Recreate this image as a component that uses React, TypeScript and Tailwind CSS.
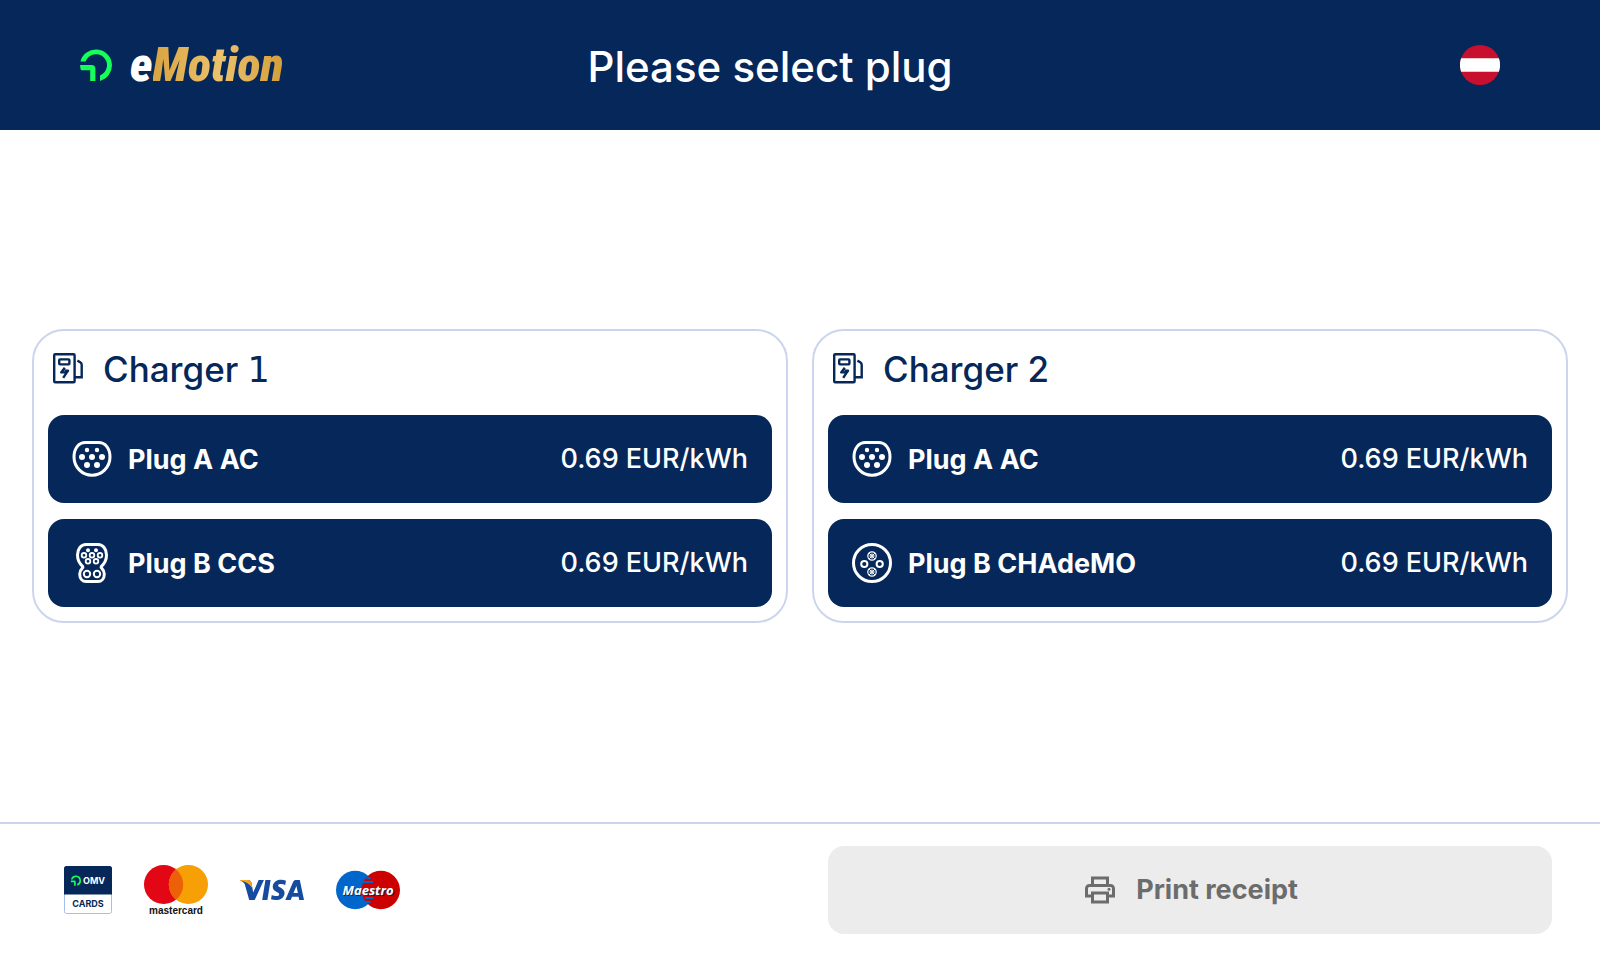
import React from "react";

type PlugKind = "ac" | "ccs" | "chademo";
type Plug = { name: string; kind: PlugKind; price: string };

const chargers: { id: number; plugs: Plug[] }[] = [
  {
    id: 1,
    plugs: [
      { name: "Plug A AC", kind: "ac", price: "0.69 EUR/kWh" },
      { name: "Plug B CCS", kind: "ccs", price: "0.69 EUR/kWh" },
    ],
  },
  {
    id: 2,
    plugs: [
      { name: "Plug A AC", kind: "ac", price: "0.69 EUR/kWh" },
      { name: "Plug B CHAdeMO", kind: "chademo", price: "0.69 EUR/kWh" },
    ],
  },
];

const MARK =
  "M0.4 12.6A16 16 0 1 1 20 31.9V26.4A11 11 0 1 0 5.6 12.6ZM0.1 16H11.6A3.8 3.8 0 0 1 15.4 19.8V32H10.2V21.2H1Q0.1 19 0.1 16Z";

function BrandMark() {
  return (
    <svg className="size-8" viewBox="0 0 32 32" aria-hidden="true">
      <path d={MARK} fill="#14ff5a" />
    </svg>
  );
}

function ChargerIcon() {
  return (
    <svg className="h-[31px] w-[30px]" viewBox="0 0 30 31" fill="none" stroke="#062759" strokeWidth="2.4" aria-hidden="true">
      <rect x="1.2" y="1.2" width="20.4" height="28" rx="1" />
      <rect x="6.2" y="6.4" width="10.2" height="5" rx="0.8" />
      <path d="M24.4 7.6L27.2 9.2Q28.7 10.2 28.7 11.7V24.2H22" />
      <path d="M11.8 14.8L8.2 19.4H13.8L10.2 24.8M11.6 17.8H15L12.6 21" strokeLinejoin="round" />
    </svg>
  );
}

function PlugIcon({ kind }: { kind: PlugKind }) {
  if (kind === "ac") {
    return (
      <svg className="size-10" viewBox="0 0 40 40" fill="#fff" aria-hidden="true">
        <path
          d="M13.5 3.5H26.5C33.5 3.5 38 9.5 38 18C38 28 30 36.2 20 36.2S2 28 2 18C2 9.5 6.5 3.5 13.5 3.5Z"
          fill="none"
          stroke="#fff"
          strokeWidth="3"
        />
        <circle cx="15" cy="11" r="2.2" />
        <circle cx="25" cy="11" r="2.2" />
        <circle cx="10" cy="18" r="3" />
        <circle cx="20" cy="18" r="3" />
        <circle cx="30" cy="18" r="3" />
        <circle cx="15" cy="26" r="3" />
        <circle cx="25" cy="26" r="3" />
      </svg>
    );
  }
  if (kind === "ccs") {
    return (
      <svg className="size-10" viewBox="0 0 40 40" fill="none" stroke="#fff" aria-hidden="true">
        <path
          d="M14 1.5H26C31 1.5 34.5 6 34.5 12C34.5 18 31.5 21.5 29.2 23.6Q28.8 24.6 29.8 25.4C31.4 27 32.3 28.6 32.3 31C32.3 35.5 29.5 38.5 26 38.5H14C10.5 38.5 7.7 35.5 7.7 31C7.7 28.6 8.6 27 10.2 25.4Q11.2 24.6 10.8 23.6C8.5 21.5 5.5 18 5.5 12C5.5 6 9 1.5 14 1.5Z"
          strokeWidth="3"
        />
        <g fill="#fff" stroke="none">
          <circle cx="16" cy="7.2" r="2" />
          <circle cx="24" cy="7.2" r="2" />
        </g>
        <g strokeWidth="1.8">
          <circle cx="12" cy="12.3" r="2.3" />
          <circle cx="20" cy="12.3" r="2.3" />
          <circle cx="28" cy="12.3" r="2.3" />
          <circle cx="16" cy="18.3" r="2.3" />
          <circle cx="24" cy="18.3" r="2.3" />
        </g>
        <g strokeWidth="2">
          <circle cx="15" cy="31" r="3.2" />
          <circle cx="25" cy="31" r="3.2" />
        </g>
      </svg>
    );
  }
  return (
    <svg className="size-10" viewBox="0 0 40 40" fill="none" stroke="#fff" aria-hidden="true">
      <circle cx="20" cy="20" r="18.5" strokeWidth="3" />
      <g strokeWidth="2">
        <circle cx="12.3" cy="21" r="3.1" />
        <circle cx="27.7" cy="21" r="3.1" />
      </g>
      {[13, 29].map((y) => (
        <g key={y}>
          <circle cx="20" cy={y} r="4.2" strokeWidth="1.2" />
          <circle cx="20" cy={y} r="2" strokeWidth="1" />
          <path d={`M17 ${y - 3}l6 6M23 ${y - 3}l-6 6`} strokeWidth="0.9" />
        </g>
      ))}
    </svg>
  );
}

function OmvCards() {
  return (
    <svg className="size-12" viewBox="0 0 48 48" role="img" aria-label="OMV Cards">
      <rect x="0.5" y="0.5" width="47" height="47" rx="2" fill="#fff" stroke="#a9bdea" />
      <path d="M0 28.5V2.5Q0 0 2.5 0H45.5Q48 0 48 2.5V28.5Z" fill="#062759" />
      <path d={MARK} transform="translate(6.8 9.4) scale(0.32)" fill="#14ff5a" />
      <text x="19" y="18" fontFamily="Inter, sans-serif" fontSize="9" fontWeight="700" fill="#fff">OMV</text>
      <text x="24" y="41.4" textAnchor="middle" fontFamily="Inter, sans-serif" fontSize="9" fontWeight="700" fill="#062759">CARDS</text>
    </svg>
  );
}

function Mastercard() {
  return (
    <svg className="h-[52px] w-16" viewBox="0 0 64 52" role="img" aria-label="Mastercard">
      <circle cx="19.6" cy="20.5" r="19.6" fill="#e30615" />
      <circle cx="44.4" cy="20.5" r="19.6" fill="#f7a006" />
      <path d="M32 5.3A19.6 19.6 0 0 1 32 35.7A19.6 19.6 0 0 1 32 5.3Z" fill="#ec6008" />
      <text x="32" y="50" textAnchor="middle" fontFamily="Liberation Sans, sans-serif" fontSize="10" fontWeight="700" fill="#111">mastercard</text>
    </svg>
  );
}

function Visa() {
  return (
    <svg className="h-[22px] w-16" viewBox="0 0 64 22" role="img" aria-label="Visa" fill="#164c9f">
      <path d="M0.5 1H8.2Q10.8 1 11.4 3.6L13.2 13.6L18.6 1H23.9L14.7 21H9.2L4.7 5.1Q3.3 2.8 0.5 1.5Z" />
      <path d="M25.4 1H30.6L27.4 21H22.2Z" />
      <path d="M46 1.7L45.2 5.9C42.6 4.8 38.4 4.4 38.1 6.5C37.9 8.7 45.3 9 44.5 14.7C43.6 20.6 37.2 22.3 31 20.3L31.8 15.9C34.5 17.2 38.8 17.8 39.2 15.5C39.6 13.1 32 12.8 32.8 7C33.7 0.9 41 -0.5 46 1.7Z" />
      <path fillRule="evenodd" d="M55.4 1H59.8L64 21H59.2L58.6 17.7H52L50.7 21H45.3L53.2 2.8Q54 1 55.4 1ZM56.4 6.9L53.5 14H57.9Z" />
      <path d="M0 1H8.2Q10.8 1 11.4 3.6L12.3 9Q8.2 2.8 0 1.5Z" fill="#faa61a" />
    </svg>
  );
}

function Maestro() {
  return (
    <svg className="h-10 w-16" viewBox="0 0 64 40" role="img" aria-label="Maestro">
      <circle cx="44.8" cy="20" r="19.2" fill="#cc0000" />
      <circle cx="19.2" cy="20" r="19.2" fill="#0066cb" />
      <path d="M32 5.7A19.2 19.2 0 0 1 32 34.3A19.2 19.2 0 0 1 32 5.7Z" fill="#cc0000" />
      <path d="M30.5 8.2H34.5M27 12H37M29 28H37.5M27.5 32H34.5" stroke="#0066cb" strokeWidth="1.8" />
      <g fontFamily="Open Sans, sans-serif" fontSize="13" fontWeight="700" fontStyle="italic" textAnchor="middle">
        <text x="33" y="25.6" fill="#102a55">Maestro</text>
        <text x="32" y="24.8" fill="#fff">Maestro</text>
      </g>
    </svg>
  );
}

function PrinterIcon() {
  return (
    <svg className="size-9" viewBox="0 0 24 24" fill="#6c6c6c" aria-hidden="true">
      <path d="M19 8h-1V3H6v5H5c-1.66 0-3 1.34-3 3v6h4v4h12v-4h4v-6c0-1.66-1.34-3-3-3zM8 5h8v3H8V5zm8 14H8v-4h8v4zm2-4v-2H6v2H4v-4c0-.55.45-1 1-1h14c.55 0 1 .45 1 1v4h-2z" />
      <circle cx="18" cy="11.5" r="1" />
    </svg>
  );
}

export default function App() {
  return (
    <div className="flex min-h-screen flex-col bg-white font-[Inter,sans-serif] text-[#062759]">
      <header className="flex h-[130px] items-center bg-[#062759] pl-20 pr-[100px] text-white">
        <div className="grid flex-1 grid-cols-[1fr_auto_1fr] items-center">
          <div className="flex items-center gap-[18px]">
            <BrandMark />
            <span className="font-['Roboto_Condensed','Roboto',sans-serif] text-[48px] leading-none font-black italic">
              e
              <span className="bg-linear-to-r from-[#d9a441] via-[#ecc26c] to-[#d29c35] bg-clip-text pr-1 text-transparent">Motion</span>
            </span>
          </div>
          <h1 className="pt-1 text-[42px] leading-none font-[450]">Please select plug</h1>
        </div>
        <button type="button" aria-label="Deutsch (Österreich)" className="size-10 rounded-full">
          <svg className="size-10" viewBox="0 0 40 40" aria-hidden="true">
            <circle cx="20" cy="20" r="20" fill="#c8102e" />
            <path d="M1.1 13.3H38.9A20 20 0 0 1 38.9 26.7H1.1A20 20 0 0 1 1.1 13.3Z" fill="#fff" />
          </svg>
        </button>
      </header>

      <main className="grid flex-1 grid-cols-2 content-center gap-6 px-8">
        {chargers.map((charger) => (
          <section key={charger.id} className="rounded-[32px] border-2 border-[#cbd5ed] p-[14px]">
            <div className="flex h-[70px] items-start gap-5 pl-[5px]">
              <div className="flex h-[46px] items-center">
                <ChargerIcon />
              </div>
              <h2 className="text-[35px] leading-[48px] font-[450]">
                Charger{" "}
                {charger.id === 1 ? <span className="font-['DejaVu_Sans',sans-serif]">1</span> : charger.id}
              </h2>
            </div>
            <div className="flex flex-col gap-4">
              {charger.plugs.map((plug) => (
                <button
                  key={plug.name}
                  type="button"
                  className="flex h-[88px] items-center gap-4 rounded-2xl bg-[#062759] px-6 text-white"
                >
                  <PlugIcon kind={plug.kind} />
                  <span className="pt-0.5 text-[27px] font-bold">{plug.name}</span>
                  <span className="ml-auto text-[27px] font-[450]">{plug.price}</span>
                </button>
              ))}
            </div>
          </section>
        ))}
      </main>

      <footer className="grid h-[138px] grid-cols-2 items-center gap-10 border-t-2 border-[#cbd5ed] pr-12 pb-1 pl-16">
        <div className="flex items-center gap-8">
          <OmvCards />
          <Mastercard />
          <Visa />
          <Maestro />
        </div>
        <button
          type="button"
          disabled
          className="flex h-[88px] items-center justify-center gap-[18px] rounded-2xl bg-[#ececec] text-[27px] font-bold text-[#6c6c6c]"
        >
          <PrinterIcon />
          Print receipt
        </button>
      </footer>
    </div>
  );
}
